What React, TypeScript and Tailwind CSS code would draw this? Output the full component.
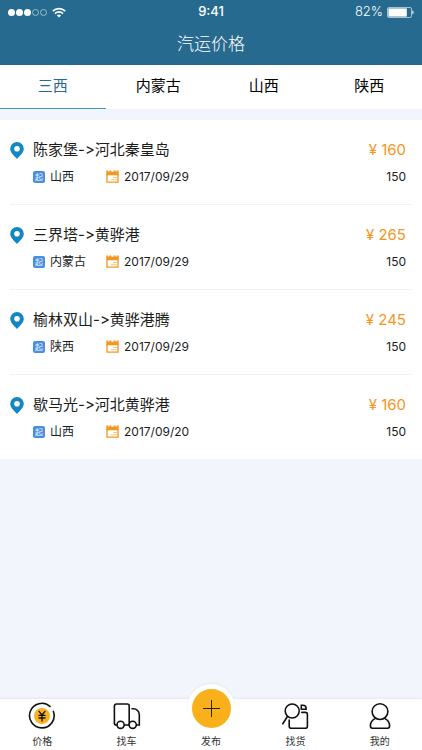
import { useState } from "react";
import type { ReactNode } from "react";
import clsx from "clsx";

const tabs = ["三西", "内蒙古", "山西", "陕西"];

const routes = [
  { id: 1, title: "陈家堡->河北秦皇岛", region: "山西", date: "2017/09/29", price: 160, distance: 150 },
  { id: 2, title: "三界塔->黄骅港", region: "内蒙古", date: "2017/09/29", price: 265, distance: 150 },
  { id: 3, title: "榆林双山->黄骅港腾", region: "陕西", date: "2017/09/29", price: 245, distance: 150 },
  { id: 4, title: "歇马光->河北黄骅港", region: "山西", date: "2017/09/20", price: 160, distance: 150 },
];

function WifiIcon() {
  return (
    <svg width="14" height="11" viewBox="0 0 14 11" fill="none" stroke="white" strokeWidth="1.7">
      <path d="M0.8 4.1a8.8 8.8 0 0 1 12.4 0" />
      <path d="M3 6.6a5.7 5.7 0 0 1 8 0" />
      <path d="M7 10.6L4.9 8.5a3 3 0 0 1 4.2 0z" fill="white" stroke="none" />
    </svg>
  );
}

function BatteryIcon() {
  return (
    <svg width="27" height="11" viewBox="0 0 27 11">
      <rect x="0.5" y="0.5" width="24" height="10" rx="1.5" fill="none" stroke="white" strokeOpacity="0.75" strokeWidth="0.8" />
      <rect x="1.4" y="1.4" width="18.4" height="8.2" fill="white" />
      <path d="M25.4 3.6c1.6 0.4 1.6 3.4 0 3.8z" fill="white" />
    </svg>
  );
}

function PinIcon() {
  return (
    <svg width="14" height="17" viewBox="0 0 14 17" className="shrink-0">
      <path
        fillRule="evenodd"
        fill="#1287c4"
        d="M7 0a6.8 6.8 0 0 0-6.8 6.8C0.2 10.8 4.4 14 7 17c2.6-3 6.8-6.2 6.8-10.2A6.8 6.8 0 0 0 7 0zM7 4a2.8 2.8 0 1 1 0 5.6A2.8 2.8 0 0 1 7 4z"
      />
    </svg>
  );
}

function CalendarIcon() {
  return (
    <svg width="13" height="13" viewBox="0 0 13 13" fill="#f5961e" className="shrink-0">
      <path d="M0.3 0.4h2v1.4h1V0.4h2v1.4h2.4V0.4h2v1.4h1V0.4h2v4.8H0.3z" />
      <path d="M1 4v8.2h11V4" fill="none" stroke="#f5961e" strokeWidth="1.3" />
      <path d="M7.4 7h1.1v1.1h-1.1zM9.4 7h1.1v1.1h-1.1zM5.4 9.2h1.1v1.1h-1.1zM7.4 9.2h1.1v1.1h-1.1zM9.4 9.2h1.1v1.1h-1.1z" />
    </svg>
  );
}

function PriceIcon() {
  return (
    <svg width="28" height="28" viewBox="0 0 28 28" fill="none" stroke="#111" strokeWidth="1.6" strokeLinecap="round">
      <path d="M22 4.4A12.3 12.3 0 1 0 25.4 9.4" />
      <circle cx="14" cy="14" r="8" fill="#f9b31c" stroke="none" />
      <path d="M11 9.3l3 3.7 3-3.7M14 13v6M11 13.4h6M11 16h6" strokeWidth="1.3" />
    </svg>
  );
}

function TruckIcon() {
  return (
    <svg width="28" height="28" viewBox="0 0 28 28" fill="none" stroke="#111" strokeWidth="1.6" strokeLinecap="round">
      <path d="M3.8 23H3.2a1.8 1.8 0 0 1-1.8-1.8V4a2 2 0 0 1 2-2h10.8a2 2 0 0 1 2 2v18.6M11.4 23h4.4" />
      <path d="M19 6.8h1.3c3.4 0 6 2.6 6 6V23h-2.6" />
      <circle cx="7.6" cy="22.8" r="3.6" />
      <circle cx="19.7" cy="22.8" r="3.6" />
    </svg>
  );
}

function GoodsIcon() {
  return (
    <svg width="28" height="28" viewBox="0 0 28 28" fill="none" stroke="#111" strokeWidth="1.6" strokeLinecap="round">
      <circle cx="11.2" cy="9" r="7" />
      <path d="M6.6 14.3L1.8 21.8" />
      <path d="M8.2 18v6.2a2 2 0 0 0 2 2h14.2a2 2 0 0 0 2-2V12.4a2 2 0 0 0-2-2h-3.6" />
      <path d="M20.3 3.2h1.6a3.2 3.2 0 0 1 3.2 3.2v0.8h-4.8z" />
    </svg>
  );
}

function ProfileIcon() {
  return (
    <svg width="28" height="28" viewBox="0 0 28 28" fill="none" stroke="#111" strokeWidth="1.6" strokeLinecap="round">
      <circle cx="14" cy="9.6" r="7.9" />
      <path d="M9 16.6c-2.8 1.4-4.6 4.2-4.6 7.4 0 1.2 0.7 2.2 2 2.2h15.2c1.3 0 2-1 2-2.2 0-3.2-1.8-6-4.6-7.4" />
    </svg>
  );
}

function NavItem({ label, children }: { label: string; children: ReactNode }) {
  return (
    <a href="#" className="flex flex-1 flex-col items-center gap-[3px] pt-[3px]">
      {children}
      <span className="text-[10px] leading-4 text-[#333]">{label}</span>
    </a>
  );
}

export default function App() {
  const [active, setActive] = useState("三西");

  return (
    <div className="flex min-h-screen flex-col bg-[#f2f5fb] font-[Inter,'Noto_Sans_CJK_SC',sans-serif] text-[#1c1c1c]">
      <header className="bg-[#266a8f] text-white">
        <div className="grid h-6 grid-cols-3 items-center px-2">
          <div className="flex items-center gap-px">
            <i className="size-[7px] rounded-full bg-white" />
            <i className="size-[7px] rounded-full bg-white" />
            <i className="size-[7px] rounded-full bg-white" />
            <i className="size-[7px] rounded-full border border-white/50" />
            <i className="mr-1 size-[7px] rounded-full border border-white/50" />
            <WifiIcon />
          </div>
          <span className="text-center text-[13px] font-medium">9:41</span>
          <div className="flex items-center justify-end gap-1 text-[13px] font-light">
            82%
            <BatteryIcon />
          </div>
        </div>
        <h1 className="text-center text-[17px] leading-[41px] font-light">汽运价格</h1>
      </header>

      <nav className="flex bg-white">
        {tabs.map((tab) => (
          <button
            key={tab}
            type="button"
            onClick={() => setActive(tab)}
            className={clsx(
              "h-11 flex-1 border-b text-[15px]",
              tab === active ? "border-[#3d9bcb] text-[#266a8f]" : "border-transparent text-black",
            )}
          >
            {tab}
          </button>
        ))}
      </nav>

      <main className="flex-1 pt-[11px]">
        <ul className="bg-white px-[10px]">
          {routes.map((route) => (
            <li
              key={route.id}
              className="flex gap-[9px] border-b border-[#f2f2f2] pt-[18px] pb-[17px] last:border-b-0"
            >
              <div className="pt-1">
                <PinIcon />
              </div>
              <div className="flex min-w-0 flex-1 flex-col gap-1">
                <h2 className="text-[15px] leading-6 [font-feature-settings:'calt'_0]">{route.title}</h2>
                <div className="flex items-center text-xs leading-[21px]">
                  <div className="flex w-[73px] items-center gap-[5px]">
                    <span className="flex size-3 shrink-0 items-center justify-center rounded-xs bg-[#4a8ee0] text-[8px] leading-3 text-white/90">
                      起
                    </span>
                    {route.region}
                  </div>
                  <div className="flex items-center gap-[5px]">
                    <CalendarIcon />
                    <time>{route.date}</time>
                  </div>
                </div>
              </div>
              <div className="flex flex-col gap-1 pr-[6px] text-right">
                <span className="text-[15px] leading-6 text-[#f5961e]">¥ {route.price}</span>
                <span className="text-xs leading-[21px]">{route.distance}</span>
              </div>
            </li>
          ))}
        </ul>
      </main>

      <nav className="sticky bottom-0 flex h-[51px] bg-white shadow-[0_-1px_2px_rgba(0,0,0,0.06)]">
        <NavItem label="价格">
          <PriceIcon />
        </NavItem>
        <NavItem label="找车">
          <TruckIcon />
        </NavItem>
        <a href="#" className="relative flex flex-1 flex-col items-center justify-end pb-px">
          <span className="absolute -top-[15px] flex size-12 items-center justify-center rounded-full bg-white shadow-[0_-1px_2px_rgba(0,0,0,0.06)]">
            <span className="flex size-[39px] items-center justify-center rounded-full bg-[#f9b01b]">
              <svg width="17" height="17" viewBox="0 0 17 17" stroke="#222" strokeWidth="1">
                <path d="M8.5 0v17M0 8.5h17" />
              </svg>
            </span>
          </span>
          <span className="relative text-[10px] leading-4 text-[#333]">发布</span>
        </a>
        <NavItem label="找货">
          <GoodsIcon />
        </NavItem>
        <NavItem label="我的">
          <ProfileIcon />
        </NavItem>
      </nav>
    </div>
  );
}
